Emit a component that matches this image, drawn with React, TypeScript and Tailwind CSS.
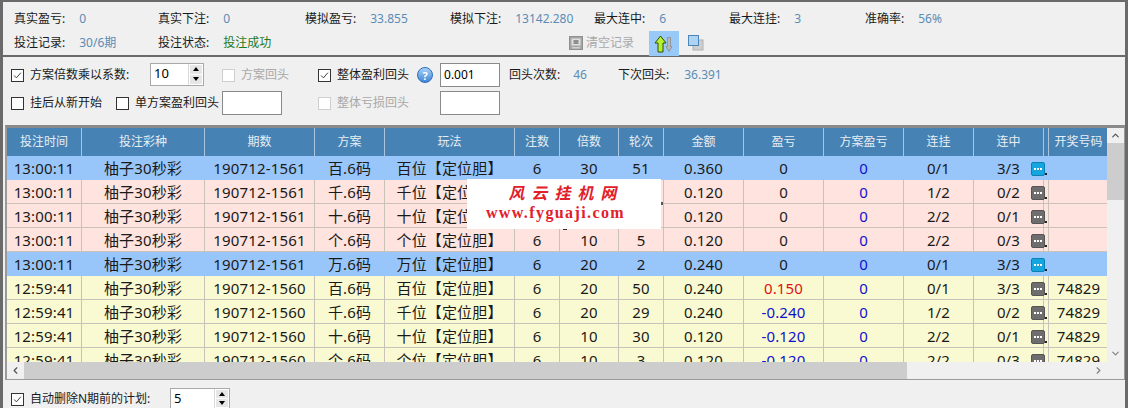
import { ChevronDown, ChevronLeft, ChevronRight, ChevronUp } from 'lucide-react';

const font = { fontFamily: '"Noto Sans", "Noto Sans CJK SC", sans-serif' };

const widths = [75, 123, 110, 70, 130, 45, 59, 45, 80, 80, 80, 70, 70, 5, 60];
const headers = ['投注时间', '投注彩种', '期数', '方案', '玩法', '注数', '倍数', '轮次', '金额', '盈亏', '方案盈亏', '连挂', '连中', '', '开奖号码'];

type Row = {
  time: string;
  issue: string;
  pos: string;
  bet: string;
  round: string;
  amount: string;
  profit: string;
  fail: string;
  hit: string;
  code: string;
  kind: 'blue' | 'pink' | 'yellow';
};

const rows: Row[] = [
  { time: '13:00:11', issue: '190712-1561', pos: '百', bet: '30', round: '51', amount: '0.360', profit: '0', fail: '0/1', hit: '3/3', code: '', kind: 'blue' },
  { time: '13:00:11', issue: '190712-1561', pos: '千', bet: '10', round: '4', amount: '0.120', profit: '0', fail: '1/2', hit: '0/2', code: '', kind: 'pink' },
  { time: '13:00:11', issue: '190712-1561', pos: '十', bet: '10', round: '6', amount: '0.120', profit: '0', fail: '2/2', hit: '0/1', code: '', kind: 'pink' },
  { time: '13:00:11', issue: '190712-1561', pos: '个', bet: '10', round: '5', amount: '0.120', profit: '0', fail: '2/2', hit: '0/3', code: '', kind: 'pink' },
  { time: '13:00:11', issue: '190712-1561', pos: '万', bet: '20', round: '2', amount: '0.240', profit: '0', fail: '0/1', hit: '3/3', code: '', kind: 'blue' },
  { time: '12:59:41', issue: '190712-1560', pos: '百', bet: '20', round: '50', amount: '0.240', profit: '0.150', fail: '0/1', hit: '3/3', code: '74829', kind: 'yellow' },
  { time: '12:59:41', issue: '190712-1560', pos: '千', bet: '20', round: '29', amount: '0.240', profit: '-0.240', fail: '1/2', hit: '0/2', code: '74829', kind: 'yellow' },
  { time: '12:59:41', issue: '190712-1560', pos: '十', bet: '10', round: '30', amount: '0.120', profit: '-0.120', fail: '2/2', hit: '0/1', code: '74829', kind: 'yellow' },
  { time: '12:59:41', issue: '190712-1560', pos: '个', bet: '10', round: '3', amount: '0.120', profit: '-0.120', fail: '2/2', hit: '0/3', code: '74829', kind: 'yellow' },
];

function Stat({ label, value, width, valueClass }: { label: string; value: string; width: string; valueClass?: string }) {
  return (
    <div className={`flex shrink-0 items-center ${width}`}>
      <span className="text-[#1a1a1a]">{label}</span>
      <span className={`ml-[14px] ${valueClass ?? 'text-[#5b8cb5]'}`}>{value}</span>
    </div>
  );
}

function Check({ checked, disabled, label, className }: { checked?: boolean; disabled?: boolean; label: string; className?: string }) {
  return (
    <label className={`flex shrink-0 items-center ${className ?? ''}`}>
      <span className={`flex h-[13px] w-[13px] items-center justify-center border bg-white ${disabled ? 'border-[#cfcfcf]' : 'border-[#333333]'}`}>
        {checked && (
          <svg viewBox="0 0 13 13" className="h-[13px] w-[13px]">
            <path d="M2.5 6.5 5.2 9.3 10.5 3.2" fill="none" stroke="#333333" strokeWidth="1.1" />
          </svg>
        )}
      </span>
      <span className={`ml-[6px] ${disabled ? 'text-[#a8a8a8]' : 'text-[#1a1a1a]'}`}>{label}</span>
    </label>
  );
}

function Spinner({ value, className }: { value: string; className: string }) {
  return (
    <div className={`flex shrink-0 border border-[#a9a9a9] bg-white ${className}`}>
      <span className="flex-1 pl-[3px] text-[13px] leading-[18px] text-black">{value}</span>
      <div className="flex w-[15px] flex-col gap-px border-l border-[#d8d8d8] p-px">
        <span className="flex flex-1 items-center justify-center bg-[#e6e6e6]">
          <span className="h-0 w-0 border-x-[3px] border-b-[4px] border-x-transparent border-b-black" />
        </span>
        <span className="flex flex-1 items-center justify-center bg-[#e6e6e6]">
          <span className="h-0 w-0 border-x-[3px] border-t-[4px] border-x-transparent border-t-black" />
        </span>
      </div>
    </div>
  );
}

function ChatIcon({ active }: { active: boolean }) {
  return (
    <>
      <span className={`absolute right-[-2px] top-[6px] flex h-[14px] w-[14px] items-center justify-center rounded-[2px] ${active ? 'border border-[#0c7fb5] bg-[#15a6e0]' : 'border border-[#555555] bg-[#6e6e6e]'}`}>
        <span className="flex gap-px">
          <span className="h-[2px] w-[2px] bg-white" />
          <span className="h-[2px] w-[2px] bg-white" />
          <span className="h-[2px] w-[2px] bg-white" />
        </span>
      </span>
      <span className="absolute right-[-4px] top-[17px] h-[2px] w-[2px] bg-[#222222]" />
    </>
  );
}

export default function App() {
  return (
    <div style={font} className="relative flex h-[408px] w-[1130px] flex-col overflow-hidden bg-white text-[12px]">
      <div className="mr-[2px] flex h-full flex-col border-x-[3px] border-t-[2px] border-[#6a6a6a] bg-[#f0f0f0]">
        {/* stats */}
        <div className="flex h-[55px] shrink-0 flex-col border-b-[2px] border-[#6a6a6a] pl-[11px] pt-[7px]">
          <div className="flex h-[19px]">
            <Stat label="真实盈亏:" value="0" width="w-[144px]" />
            <Stat label="真实下注:" value="0" width="w-[147px]" />
            <Stat label="模拟盈亏:" value="33.855" width="w-[145px]" />
            <Stat label="模拟下注:" value="13142.280" width="w-[144px]" />
            <Stat label="最大连中:" value="6" width="w-[135px]" />
            <Stat label="最大连挂:" value="3" width="w-[136px]" />
            <Stat label="准确率:" value="56%" width="w-[120px]" />
          </div>
          <div className="mt-[5px] flex h-[20px] items-center">
            <Stat label="投注记录:" value="30/6期" width="w-[144px]" />
            <Stat label="投注状态:" value="投注成功" width="w-[411px]" valueClass="text-[#1f7a1f]" />
            <div className="flex items-center text-[#a8a8a8]">
              <svg viewBox="0 0 14 16" className="h-[16px] w-[14px]">
                <rect x="0.5" y="1.5" width="13" height="13" fill="#a6a6a6" stroke="#8f8f8f" />
                <rect x="2.5" y="3.5" width="9" height="7" fill="#dedede" />
                <rect x="4.5" y="5" width="5" height="4" fill="#8f8f8f" />
                <rect x="3" y="12" width="8" height="1.5" fill="#d0d0d0" />
              </svg>
              <span className="ml-[3px]">清空记录</span>
            </div>
            <div className="ml-[15px] flex h-[25px] w-[30px] items-center justify-center bg-[#99c9f7]">
              <svg viewBox="0 0 20 20" className="h-[20px] w-[20px]">
                <path d="M13.5 4.5v9H12l3 5 3-5h-1.5v-9z" fill="#b8b8b8" stroke="#858585" strokeWidth="0.7" />
                <path d="M6.5 3 1 10h3v9h5v-9h3z" fill="#b6f22a" stroke="#2f4a10" strokeWidth="1" />
              </svg>
            </div>
            <div className="ml-[8px] h-[18px] w-[18px]">
              <svg viewBox="0 0 18 18" className="h-[18px] w-[18px]">
                <rect x="6" y="6" width="10" height="10" fill="#cfcfcf" stroke="#b0b0b0" />
                <rect x="1.5" y="1.5" width="10" height="10" fill="#aed4f5" stroke="#4f86b8" />
              </svg>
            </div>
          </div>
        </div>

        {/* options */}
        <div className="flex h-[68px] shrink-0 flex-col gap-[4px] pl-[8px] pt-[6px]">
          <div className="flex h-[24px] items-center">
            <Check checked label="方案倍数乘以系数:" className="w-[139px]" />
            <Spinner value="10" className="-mt-[2px] h-[23px] w-[54px]" />
            <Check disabled label="方案回头" className="ml-[18px] w-[96px]" />
            <Check checked label="整体盈利回头" />
            <span className="ml-[8px] flex h-[16px] w-[16px] shrink-0 items-center justify-center rounded-full border border-[#2a6fc0] bg-gradient-to-b from-[#a8d2f5] to-[#3f86d6] text-[11px] font-bold leading-none text-white">?</span>
            <span className="ml-[7px] flex h-[24px] w-[60px] shrink-0 items-center border border-[#8a8a8a] bg-white pl-[3px] text-[12px] text-black">0.001</span>
            <span className="ml-[9px] text-[#1a1a1a]">回头次数:</span>
            <span className="ml-[13px] text-[#5b8cb5]">46</span>
            <span className="ml-[31px] text-[#1a1a1a]">下次回头:</span>
            <span className="ml-[15px] text-[#5b8cb5]">36.391</span>
          </div>
          <div className="flex h-[24px] items-center">
            <Check label="挂后从新开始" className="w-[105px]" />
            <Check label="单方案盈利回头" />
            <span className="ml-[3px] h-[24px] w-[60px] shrink-0 border border-[#8a8a8a] bg-white" />
            <Check disabled label="整体亏损回头" className="ml-[36px] w-[122px]" />
            <span className="h-[24px] w-[60px] shrink-0 border border-[#8a8a8a] bg-white" />
          </div>
        </div>

        {/* table */}
        <div className="ml-[2px] flex shrink-0 flex-col border-b border-l-[2px] border-r border-t-[3px] border-[#9a9a9a] border-t-[#8a8a8a]">
          <div className="flex h-[234px]">
            <div className="w-[1100px] overflow-hidden bg-white">
              <table className="w-[1102px] table-fixed border-separate border-spacing-0 text-center">
                <colgroup>
                  {widths.map((w, i) => (
                    <col key={i} style={{ width: w }} />
                  ))}
                </colgroup>
                <thead>
                  <tr className="h-[28px] bg-[#4682b4] text-[12px] text-[#e6eef5]">
                    {headers.map((h, i) => (
                      <th key={i} className="whitespace-nowrap border-r border-[#a9c6de] p-0 font-normal">{h}</th>
                    ))}
                  </tr>
                </thead>
                <tbody className="text-[15px] leading-[22px] tracking-[0.15px] text-[#1a1a1a]">
                  {rows.map((r, i) => {
                    const bg = r.kind === 'blue' ? 'bg-[#99c6fa]' : r.kind === 'pink' ? 'bg-[#fee3de]' : 'bg-[#fafad2]';
                    const line = r.kind === 'blue' ? 'border-[#99c6fa]' : 'border-[#c9c2b8]';
                    const cell = `h-[24px] overflow-hidden whitespace-nowrap border-b border-r p-0 pt-px ${line}`;
                    const profitColor = r.profit.startsWith('-') ? 'text-[#1010d0]' : r.profit === '0' ? '' : 'text-[#e01010]';
                    return (
                      <tr key={i} className={bg}>
                        <td className={cell}>{r.time}</td>
                        <td className={cell}>柚子30秒彩</td>
                        <td className={cell}>{r.issue}</td>
                        <td className={cell}>{r.pos}.6码</td>
                        <td className={cell}>{r.pos}位【定位胆】</td>
                        <td className={cell}>6</td>
                        <td className={cell}>{r.bet}</td>
                        <td className={cell}>{r.round}</td>
                        <td className={cell}>{r.amount}</td>
                        <td className={`${cell} ${profitColor}`}>{r.profit}</td>
                        <td className={`${cell} text-[#1010d0]`}>0</td>
                        <td className={cell}>{r.fail}</td>
                        <td className={`relative h-[24px] whitespace-nowrap border-b border-r p-0 pt-px ${line}`}>
                          {r.hit}
                          <ChatIcon active={r.kind === 'blue'} />
                        </td>
                        <td className={cell} />
                        <td className={cell}>{r.code}</td>
                      </tr>
                    );
                  })}
                </tbody>
              </table>
            </div>
            {/* vertical scrollbar */}
            <div className="flex w-[17px] flex-col items-center bg-[#f0f0f0]">
              <span className="flex h-[15px] items-center">
                <ChevronUp size={11} strokeWidth={2.5} className="text-[#505050]" />
              </span>
              <span className="h-[57px] w-full bg-[#cdcdcd]" />
              <span className="mt-auto flex h-[17px] items-center">
                <ChevronDown size={11} strokeWidth={2.5} className="text-[#808080]" />
              </span>
            </div>
          </div>
          {/* horizontal scrollbar */}
          <div className="flex h-[17px] items-center bg-[#f0f0f0]">
            <span className="flex w-[17px] justify-center">
              <ChevronLeft size={11} strokeWidth={2.5} className="text-[#505050]" />
            </span>
            <span className="h-full w-[883px] bg-[#cdcdcd]" />
            <span className="ml-[183px] flex w-[17px] justify-center">
              <ChevronRight size={11} strokeWidth={2.5} className="text-[#808080]" />
            </span>
          </div>
        </div>

        {/* footer */}
        <div className="flex flex-1 items-start pl-[8px] pt-[8px]">
          <Check checked label="自动删除N期前的计划:" className="mt-[2px] w-[159px]" />
          <Spinner value="5" className="h-[21px] w-[60px]" />
        </div>
      </div>

      {/* watermark pasted over the grid */}
      <div className="absolute left-[467px] top-[179px] flex h-[50px] w-[194px] flex-col items-center bg-white font-['Liberation_Serif',serif] font-bold text-[#e0202a]">
        <span className="mt-[2px] -skew-x-12 pl-[7px] text-[16px] leading-[22px] tracking-[7px]" style={{ fontFamily: '"Noto Sans CJK SC", serif' }}>风云挂机网</span>
        <span className="-ml-[17px] text-[16px] leading-[20px] tracking-[1.4px]">www.fyguaji.com</span>
        <span className="absolute left-[194px] top-[23px] h-[3px] w-[2px] bg-[#555555]" />
        <span className="absolute bottom-[-1px] left-[96px] h-px w-[4px] bg-[#333333]" />
      </div>
    </div>
  );
}
